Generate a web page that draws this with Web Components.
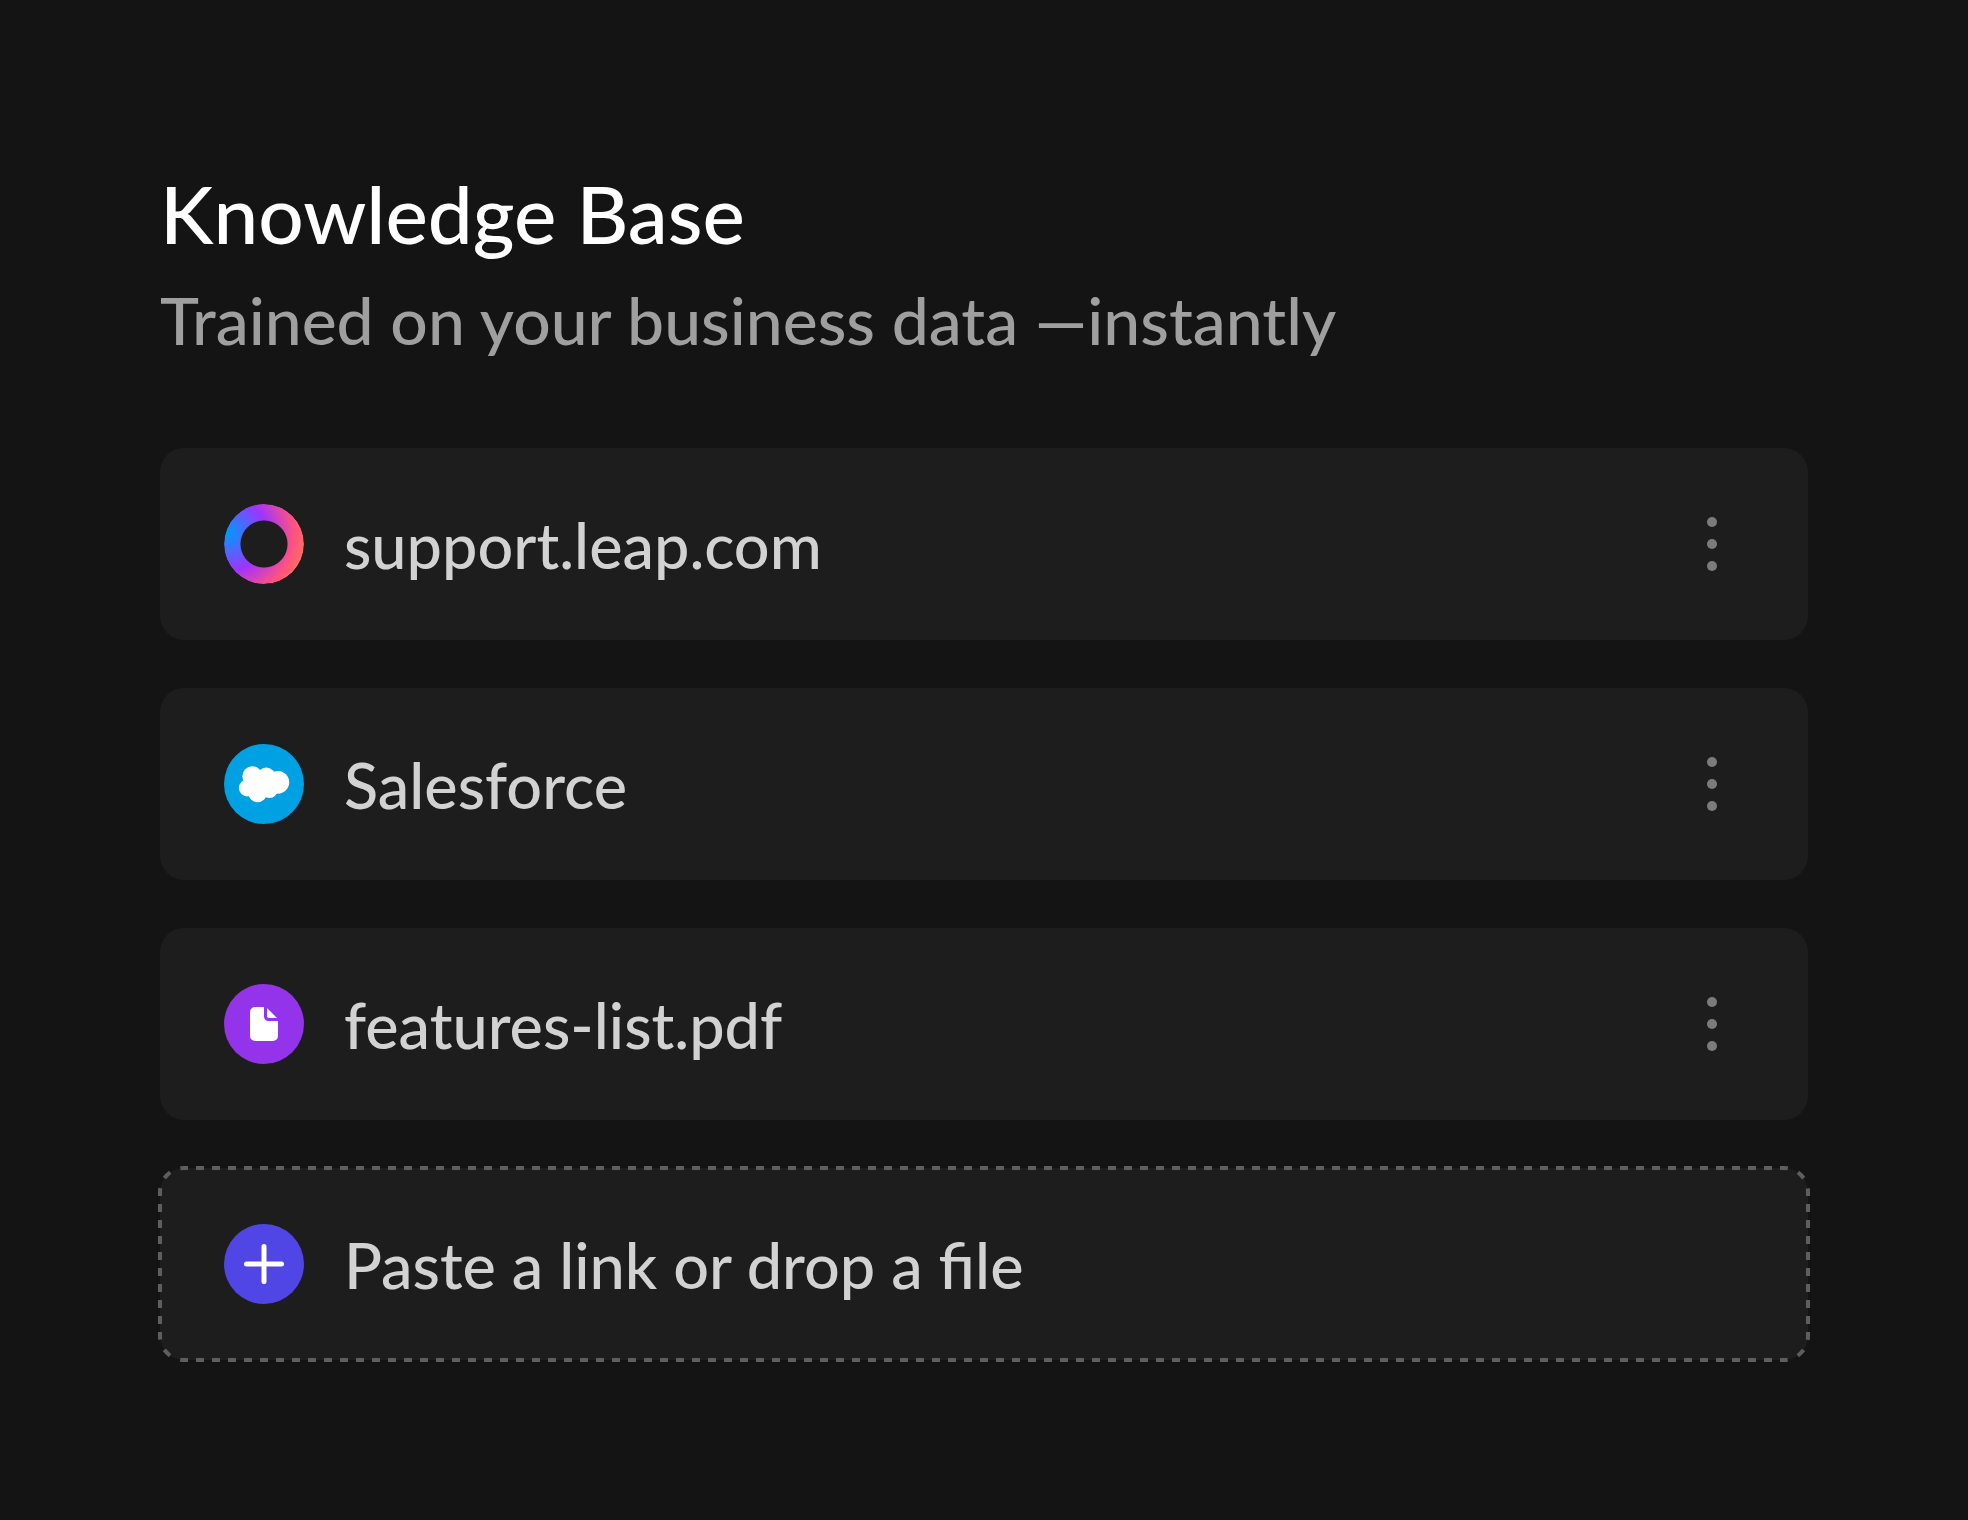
<!DOCTYPE html>
<html lang="en">
<head>
<meta charset="utf-8">
<meta name="viewport" content="width=device-width, initial-scale=1">
<title>Knowledge Base</title>
<style>
  html { background: #141414; }
  body { margin: 0; font-family: Lato, "Open Sans", sans-serif; font-weight: 500; color: #d2d2d2; }
</style>
</head>
<body>
<knowledge-base>
  <span slot="title">Knowledge Base</span>
  <span slot="subtitle">Trained on your business data —instantly</span>
  <source-row icon="leap">support.leap.com</source-row>
  <source-row icon="salesforce">Salesforce</source-row>
  <source-row icon="file">features-list.pdf</source-row>
  <add-source>Paste a link or drop a file</add-source>
</knowledge-base>

<script>
  const ICONS = {
    leap: `<div class="ring"></div>`,
    salesforce: `<svg viewBox="0 0 80 80" aria-hidden="true">
      <circle cx="40" cy="40" r="40" fill="#00a1e3"/>
      <g fill="#fff">
        <circle cx="28.3" cy="32.2" r="10"/><circle cx="42.2" cy="32.8" r="9.2"/>
        <circle cx="53.8" cy="38.3" r="11.4"/><circle cx="23.3" cy="44" r="8.4"/>
        <circle cx="33.6" cy="49" r="9.2"/><circle cx="45.5" cy="46" r="8"/>
        <path d="M24 35 40 30 54 36 54 46 45 51 28 50Z"/>
      </g></svg>`,
    file: `<svg viewBox="0 0 80 80" aria-hidden="true">
      <circle cx="40" cy="40" r="40" fill="#9333ea"/>
      <path fill="#fff" d="M31 23h9v9.500a4.500 4.500 0 0 0 4.500 4.500H54v15a5 5 0 0 1-5 5H31a5 5 0 0 1-5-5V28a5 5 0 0 1 5-5Z"/>
      <path fill="#fff" d="M43 24v8a2 2 0 0 0 2 2h8Z"/></svg>`,
    plus: `<svg viewBox="0 0 80 80" aria-hidden="true">
      <circle cx="40" cy="40" r="40" fill="#4f46e5"/>
      <path d="M40 22.500v35M22.500 40h35" stroke="#fff" stroke-width="5" stroke-linecap="round"/></svg>`
  };

  class SourceIcon extends HTMLElement {
    connectedCallback() {
      const root = this.shadowRoot || this.attachShadow({ mode: "open" });
      root.innerHTML = `<style>
        :host { display: block; flex: none; width: 80px; height: 80px; }
        svg { display: block; width: 100%; height: 100%; }
        .ring {
          width: 100%; height: 100%; border-radius: 50%;
          background: radial-gradient(circle at 4px 29px, #0099ff 0, #a033ff 38px, #ff5280 66px, #ff7061 78px);
          -webkit-mask: radial-gradient(circle, transparent 23px, #000 24px);
          mask: radial-gradient(circle, transparent 23px, #000 24px);
        }
      </style>${ICONS[this.getAttribute("name")]}`;
    }
  }

  class SourceRow extends HTMLElement {
    connectedCallback() {
      const root = this.shadowRoot || this.attachShadow({ mode: "open" });
      root.innerHTML = `<style>
        :host {
          display: flex; align-items: center; gap: 40px; box-sizing: border-box;
          min-height: 192px; padding: 24px 64px; border-radius: 24px; background: #1d1d1d;
        }
        .label { flex: 1; padding-top: 2px; font-size: 63px; line-height: 80px; }
        button {
          width: 64px; height: 80px; padding: 0; border: 0; background: none;
          color: #7c7c7c; cursor: pointer;
        }
        svg { display: block; width: 100%; height: 100%; }
      </style>
      <source-icon name="${this.getAttribute("icon")}"></source-icon>
      <div class="label"><slot></slot></div>
      <button type="button" aria-label="More options">
        <svg viewBox="0 0 64 80" fill="currentColor" aria-hidden="true">
          <circle cx="32" cy="18" r="5"/><circle cx="32" cy="40" r="5"/><circle cx="32" cy="62" r="5"/>
        </svg>
      </button>`;
    }
  }

  /* Dashes are fitted to each side and each corner, so every side ends in the middle of a dash. */
  class DashedFrame extends HTMLElement {
    connectedCallback() {
      const root = this.shadowRoot || this.attachShadow({ mode: "open" });
      root.innerHTML = `<style>
        :host { display: block; }
        svg { display: block; width: 100%; height: 100%; overflow: visible; }
        path { fill: none; stroke: #5e5e5e; stroke-width: 4; }
      </style><svg aria-hidden="true"></svg>`;
      this.draw();
      new ResizeObserver(() => this.draw()).observe(this);
    }
    draw() {
      const w = this.clientWidth, h = this.clientHeight, r = 24, dash = 8;
      if (!w || !h) return;
      const segment = (d, length) => {
        const period = length / Math.max(1, Math.floor(length / 16));
        return `<path d="${d}" stroke-dasharray="${dash} ${period - dash}" stroke-dashoffset="${dash / 2}"/>`;
      };
      const arc = Math.PI * r / 2;
      this.shadowRoot.querySelector("svg").innerHTML =
        segment(`M${r} 0H${w - r}`, w - 2 * r) +
        segment(`M${w - r} 0A${r} ${r} 0 0 1 ${w} ${r}`, arc) +
        segment(`M${w} ${r}V${h - r}`, h - 2 * r) +
        segment(`M${w} ${h - r}A${r} ${r} 0 0 1 ${w - r} ${h}`, arc) +
        segment(`M${w - r} ${h}H${r}`, w - 2 * r) +
        segment(`M${r} ${h}A${r} ${r} 0 0 1 0 ${h - r}`, arc) +
        segment(`M0 ${h - r}V${r}`, h - 2 * r) +
        segment(`M0 ${r}A${r} ${r} 0 0 1 ${r} 0`, arc);
    }
  }

  class AddSource extends HTMLElement {
    connectedCallback() {
      const root = this.shadowRoot || this.attachShadow({ mode: "open" });
      root.innerHTML = `<style>
        :host { display: block; }
        button {
          position: relative; display: flex; align-items: center; gap: 40px; box-sizing: border-box;
          width: 100%; min-height: 192px; padding: 24px 64px; border: 0; border-radius: 24px;
          background: #1d1d1d; color: inherit; font: inherit; text-align: left; cursor: pointer;
        }
        .label { flex: 1; padding-top: 2px; font-size: 63px; line-height: 80px; }
        dashed-frame { position: absolute; inset: 0; }
      </style>
      <button type="button">
        <source-icon name="plus"></source-icon>
        <span class="label"><slot></slot></span>
        <dashed-frame></dashed-frame>
      </button>`;
    }
  }

  class KnowledgeBase extends HTMLElement {
    connectedCallback() {
      const root = this.shadowRoot || this.attachShadow({ mode: "open" });
      root.innerHTML = `<style>
        :host { display: block; padding: 160px; }
        header { margin-bottom: 80px; }
        h1 { margin: 0; font-size: 80px; line-height: 106px; font-weight: inherit; color: #fff; }
        p { margin: 6px 0 0; font-size: 66px; line-height: 96px; color: #9f9f9f; }
        .list { display: flex; flex-direction: column; gap: 48px; }
      </style>
      <header>
        <h1><slot name="title"></slot></h1>
        <p><slot name="subtitle"></slot></p>
      </header>
      <div class="list"><slot></slot></div>`;
    }
  }

  customElements.define("source-icon", SourceIcon);
  customElements.define("source-row", SourceRow);
  customElements.define("dashed-frame", DashedFrame);
  customElements.define("add-source", AddSource);
  customElements.define("knowledge-base", KnowledgeBase);
</script>
</body>
</html>
